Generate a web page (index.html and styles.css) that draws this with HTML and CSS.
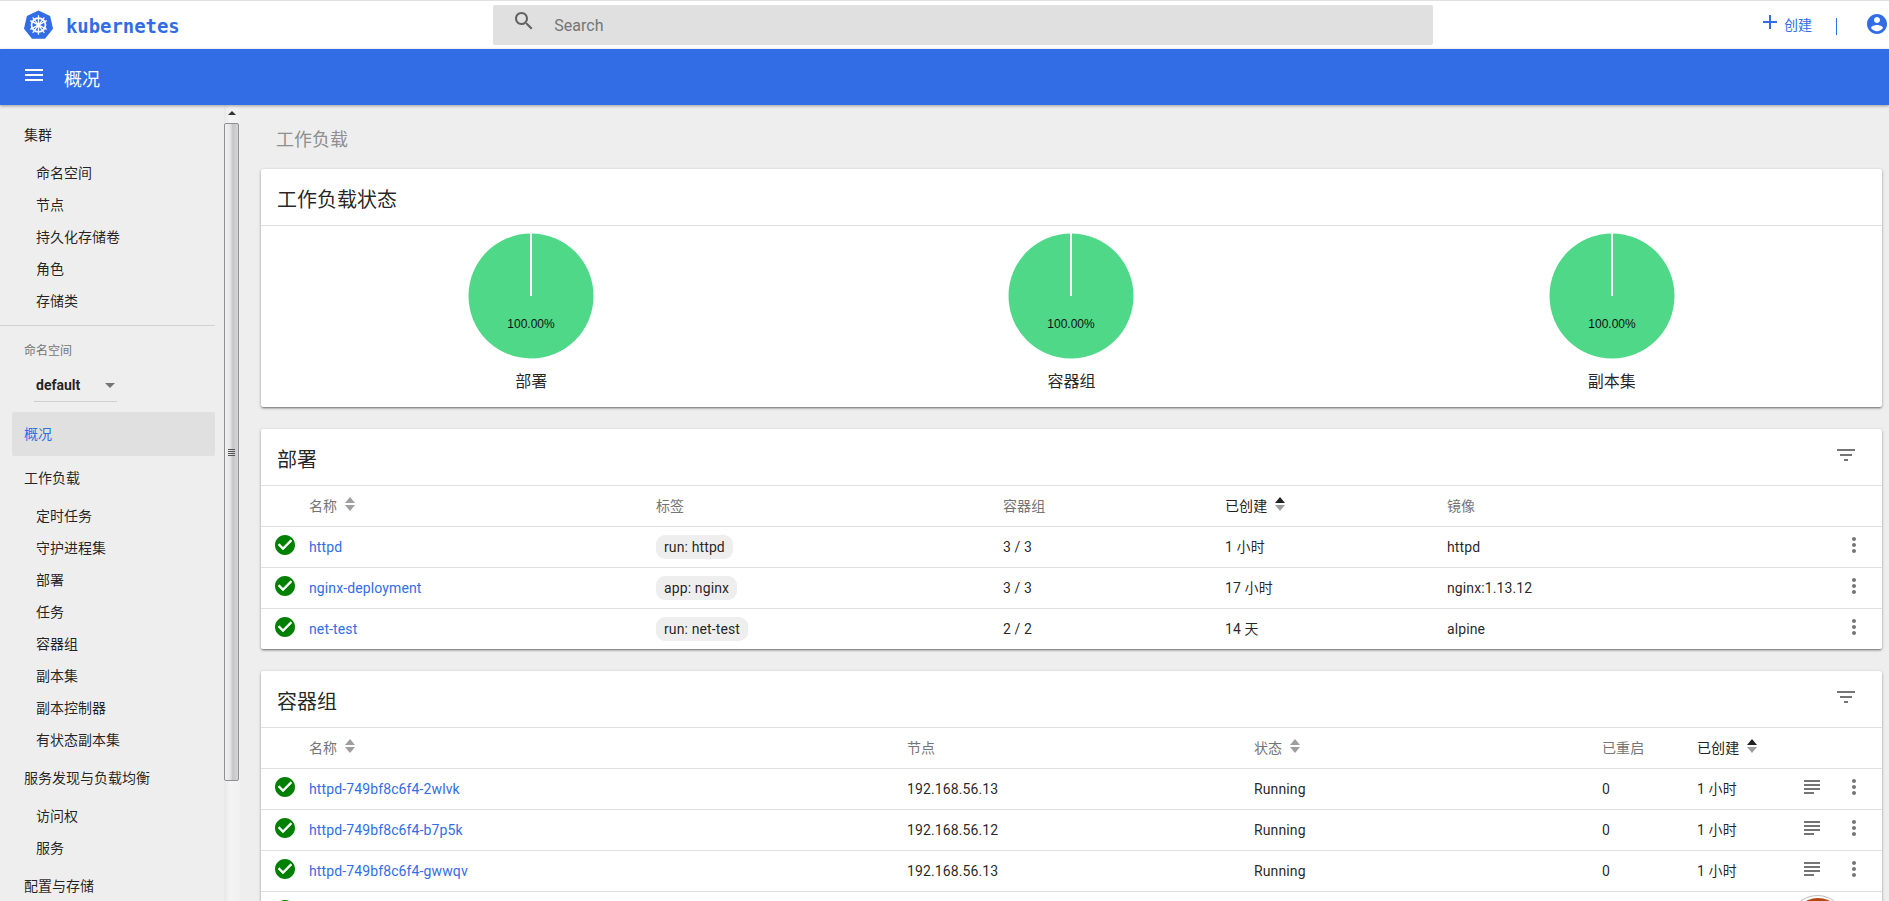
FILE: index.html
```html
<!DOCTYPE html>
<html lang="zh-CN">
<head>
<meta charset="utf-8">
<title>概况 - Kubernetes Dashboard</title>
<link rel="stylesheet" href="styles.css">
</head>
<body>
<svg class="defs" aria-hidden="true">
  <defs>
    <symbol id="i-check" viewBox="0 0 24 24"><path d="M12 2C6.48 2 2 6.48 2 12s4.48 10 10 10 10-4.48 10-10S17.52 2 12 2zm-2 15l-5-5 1.41-1.41L10 14.17l7.59-7.59L19 8l-9 9z" fill="#008000"/><path d="M10 17l-5-5 1.41-1.41L10 14.17l7.59-7.59L19 8z" fill="#fff"/></symbol>
    <symbol id="i-more" viewBox="0 0 24 24"><path d="M12 8c1.1 0 2-.9 2-2s-.9-2-2-2-2 .9-2 2 .9 2 2 2zm0 2c-1.1 0-2 .9-2 2s.9 2 2 2 2-.9 2-2-.9-2-2-2zm0 6c-1.1 0-2 .9-2 2s.9 2 2 2 2-.9 2-2-.9-2-2-2z"/></symbol>
    <symbol id="i-logs" viewBox="0 0 24 24"><path d="M14 17H4v2h10v-2zm6-8H4v2h16V9zM4 15h16v-2H4v2zM4 5v2h16V5H4z"/></symbol>
    <symbol id="i-filter" viewBox="0 0 24 24"><path d="M10 18h4v-2h-4v2zM3 6v2h18V6H3zm3 7h12v-2H6v2z"/></symbol>
    <symbol id="i-sort" viewBox="0 0 10 14"><path d="M5 0l5 6H0z"/><path d="M0 8h10l-5 6z"/></symbol>
    <symbol id="i-sort-up" viewBox="0 0 10 14"><path d="M5 0l5 6H0z" fill="#212121"/><path d="M0 8h10l-5 6z" fill="#9e9e9e"/></symbol>
  </defs>
</svg>

<header class="topbar">
  <a class="brand">
    <svg class="logo" viewBox="0 0 32 32">
      <path d="M16 .5l12 5.8 3 13-8.300 10.400H9.300L1 19.300l3-13z" fill="#326de6"/>
      <g fill="none" stroke="#fff">
        <circle cx="16" cy="15.500" r="7.200" stroke-width="1.800"/>
        <path d="M16 5.500v20M7.500 11l17 9M24.500 11l-17 9M10 23.500l12-16M22 23.500l-12-16" stroke-width="1.300"/>
      </g>
      <circle cx="16" cy="15.500" r="2" fill="#fff"/>
    </svg>
    <span class="brand-name">kubernetes</span>
  </a>
  <div class="search">
    <svg class="search-icon" viewBox="0 0 24 24"><path d="M15.500 14h-.79l-.28-.27C15.410 12.590 16 11.110 16 9.500 16 5.910 13.090 3 9.500 3S3 5.910 3 9.500 5.910 16 9.500 16c1.610 0 3.090-.59 4.230-1.570l.27.28v.79l5 4.990L20.490 19l-4.990-5zm-6 0C7.010 14 5 11.990 5 9.500S7.010 5 9.500 5 14 7.010 14 9.500 11.990 14 9.500 14z"/></svg>
    <span class="search-text">Search</span>
  </div>
  <div class="actions">
    <svg class="plus" viewBox="0 0 24 24"><path d="M19 13h-6v6h-2v-6H5v-2h6V5h2v6h6v2z"/></svg>
    <span class="create">创建</span>
    <span class="divider"></span>
    <svg class="account" viewBox="0 0 24 24"><path d="M12 2C6.480 2 2 6.480 2 12s4.480 10 10 10 10-4.480 10-10S17.520 2 12 2zm0 3c1.660 0 3 1.340 3 3s-1.340 3-3 3-3-1.340-3-3 1.340-3 3-3zm0 14.200c-2.500 0-4.710-1.280-6-3.220.03-1.990 4-3.080 6-3.080 1.990 0 5.970 1.090 6 3.080-1.290 1.940-3.500 3.220-6 3.220z"/></svg>
  </div>
</header>

<div class="toolbar">
  <svg class="menu" viewBox="0 0 24 24"><path d="M3 18h18v-2H3v2zm0-5h18v-2H3v2zm0-7v2h18V6H3z"/></svg>
  <span class="toolbar-title">概况</span>
</div>

<div class="main">
  <nav class="sidebar">
    <div class="nav-title first">集群</div>
    <a class="nav-item">命名空间</a>
    <a class="nav-item">节点</a>
    <a class="nav-item">持久化存储卷</a>
    <a class="nav-item">角色</a>
    <a class="nav-item">存储类</a>
    <div class="nav-sep"></div>
    <div class="ns-label">命名空间</div>
    <div class="ns-select"><span>default</span><i class="ns-arrow"></i></div>
    <div class="nav-active">概况</div>
    <div class="nav-title">工作负载</div>
    <a class="nav-item">定时任务</a>
    <a class="nav-item">守护进程集</a>
    <a class="nav-item">部署</a>
    <a class="nav-item">任务</a>
    <a class="nav-item">容器组</a>
    <a class="nav-item">副本集</a>
    <a class="nav-item">副本控制器</a>
    <a class="nav-item">有状态副本集</a>
    <div class="nav-title">服务发现与负载均衡</div>
    <a class="nav-item">访问权</a>
    <a class="nav-item">服务</a>
    <div class="nav-title">配置与存储</div>
  </nav>

  <div class="scrollbar">
    <div class="scroll-up"><i></i></div>
    <div class="scroll-thumb"><i></i></div>
  </div>

  <main class="content">
    <h1 class="page-title">工作负载</h1>

    <section class="card">
      <div class="card-head"><h2>工作负载状态</h2></div>
      <div class="pies">
        <figure class="pie">
          <svg viewBox="0 0 126 126"><circle cx="63" cy="63" r="62.500" fill="#4ed887"/><rect x="62" y="0" width="2" height="63" fill="#fff"/><text x="63" y="95" text-anchor="middle" class="pie-value">100.00%</text></svg>
          <figcaption>部署</figcaption>
        </figure>
        <figure class="pie">
          <svg viewBox="0 0 126 126"><circle cx="63" cy="63" r="62.500" fill="#4ed887"/><rect x="62" y="0" width="2" height="63" fill="#fff"/><text x="63" y="95" text-anchor="middle" class="pie-value">100.00%</text></svg>
          <figcaption>容器组</figcaption>
        </figure>
        <figure class="pie">
          <svg viewBox="0 0 126 126"><circle cx="63" cy="63" r="62.500" fill="#4ed887"/><rect x="62" y="0" width="2" height="63" fill="#fff"/><text x="63" y="95" text-anchor="middle" class="pie-value">100.00%</text></svg>
          <figcaption>副本集</figcaption>
        </figure>
      </div>
    </section>

    <section class="card">
      <div class="card-head"><h2>部署</h2><svg class="ic filter"><use href="#i-filter"/></svg></div>
      <div class="row deploy head">
        <span></span>
        <span>名称 <svg class="sort"><use href="#i-sort"/></svg></span>
        <span>标签</span>
        <span>容器组</span>
        <span class="active">已创建 <svg class="sort"><use href="#i-sort-up"/></svg></span>
        <span>镜像</span>
        <span></span>
      </div>
      <div class="row deploy">
        <svg class="status"><use href="#i-check"/></svg>
        <a class="link">httpd</a>
        <span><span class="chip">run: httpd</span></span>
        <span>3 / 3</span><span>1 小时</span><span>httpd</span>
        <svg class="ic more"><use href="#i-more"/></svg>
      </div>
      <div class="row deploy">
        <svg class="status"><use href="#i-check"/></svg>
        <a class="link">nginx-deployment</a>
        <span><span class="chip">app: nginx</span></span>
        <span>3 / 3</span><span>17 小时</span><span>nginx:1.13.12</span>
        <svg class="ic more"><use href="#i-more"/></svg>
      </div>
      <div class="row deploy last">
        <svg class="status"><use href="#i-check"/></svg>
        <a class="link">net-test</a>
        <span><span class="chip">run: net-test</span></span>
        <span>2 / 2</span><span>14 天</span><span>alpine</span>
        <svg class="ic more"><use href="#i-more"/></svg>
      </div>
    </section>

    <section class="card">
      <div class="card-head"><h2>容器组</h2><svg class="ic filter"><use href="#i-filter"/></svg></div>
      <div class="row pods head">
        <span></span>
        <span>名称 <svg class="sort"><use href="#i-sort"/></svg></span>
        <span>节点</span>
        <span>状态 <svg class="sort"><use href="#i-sort"/></svg></span>
        <span>已重启</span>
        <span class="active">已创建 <svg class="sort"><use href="#i-sort-up"/></svg></span>
        <span></span><span></span>
      </div>
      <div class="row pods">
        <svg class="status"><use href="#i-check"/></svg>
        <a class="link">httpd-749bf8c6f4-2wlvk</a>
        <span>192.168.56.13</span><span>Running</span><span>0</span><span>1 小时</span>
        <svg class="ic logs"><use href="#i-logs"/></svg>
        <svg class="ic more"><use href="#i-more"/></svg>
      </div>
      <div class="row pods">
        <svg class="status"><use href="#i-check"/></svg>
        <a class="link">httpd-749bf8c6f4-b7p5k</a>
        <span>192.168.56.12</span><span>Running</span><span>0</span><span>1 小时</span>
        <svg class="ic logs"><use href="#i-logs"/></svg>
        <svg class="ic more"><use href="#i-more"/></svg>
      </div>
      <div class="row pods">
        <svg class="status"><use href="#i-check"/></svg>
        <a class="link">httpd-749bf8c6f4-gwwqv</a>
        <span>192.168.56.13</span><span>Running</span><span>0</span><span>1 小时</span>
        <svg class="ic logs"><use href="#i-logs"/></svg>
        <svg class="ic more"><use href="#i-more"/></svg>
      </div>
      <div class="row pods partial">
        <svg class="status"><use href="#i-check"/></svg>
        <div class="avatar"><i></i></div>
      </div>
    </section>
  </main>
</div>
</body>
</html>
```

FILE: styles.css
```css
* { box-sizing: border-box; }
html, body { height: 100%; margin: 0; }
body {
  display: flex;
  flex-direction: column;
  overflow: hidden;
  background: #eee;
  color: rgba(0, 0, 0, .87);
  font: 14px/20px Roboto, "Noto Sans CJK SC", sans-serif;
}
.defs { position: absolute; width: 0; height: 0; }
a { color: inherit; text-decoration: none; }

/* Top bar */
.topbar {
  flex: none;
  display: flex;
  align-items: center;
  height: 49px;
  background: #fff;
  border-top: 1px solid #e0e0e0;
}
.brand { display: flex; align-items: center; width: 494px; padding-left: 23px; }
.logo { width: 31px; height: 31px; }
.brand-name {
  margin: 2px 0 0 12px;
  color: #326de6;
  font: 700 18.900px/24px "DejaVu Sans Mono", monospace;
}
.search {
  display: flex;
  align-items: center;
  width: 941px;
  height: 40px;
  padding-left: 19px;
  background: #e0e0e0;
  border-radius: 2px;
}
.search-icon { width: 24px; height: 24px; margin-top: -8px; fill: #616161; }
.search-text { margin: 2px 0 0 18px; color: #757575; font-size: 16px; }
.actions {
  display: flex;
  align-items: center;
  margin-left: 325px;
  flex: none;
}
.plus { width: 24px; height: 24px; margin-top: -7px; fill: #326de6; }
.create { margin-left: 2px; color: #326de6; font-size: 14px; }
.divider { width: 1px; height: 17px; margin: 2px 0 0 24px; background: #326de6; }
.account { width: 24px; height: 24px; margin: -2px 0 0 28px; fill: #326de6; flex: none; }

/* Blue toolbar */
.toolbar {
  position: relative;
  z-index: 2;
  flex: none;
  display: flex;
  align-items: center;
  height: 56px;
  padding-left: 22px;
  background: #326de6;
  box-shadow: 0 1px 3px rgba(0, 0, 0, .35);
}
.menu { width: 24px; height: 24px; margin-top: -4px; fill: #fff; }
.toolbar-title { margin: 5px 0 0 18px; color: #fff; font-size: 18px; line-height: 24px; }

/* Main layout */
.main { flex: 1; display: flex; min-height: 0; overflow: hidden; }

/* Sidebar */
.sidebar { flex: none; width: 224px; padding: 14px 9px 0 0; background: #eee; }
.nav-title {
  height: 32px;
  margin: 6px 0;
  padding-left: 24px;
  line-height: 32px;
}
.nav-title.first { margin-top: 0; }
.nav-item {
  display: block;
  height: 32px;
  padding-left: 36px;
  line-height: 32px;
}
.nav-sep { height: 1px; margin-top: 8px; background: #d2d2d2; }
.ns-label {
  margin-top: 15px;
  padding-left: 24px;
  color: #757575;
  font-size: 12px;
}
.ns-select {
  display: flex;
  align-items: center;
  justify-content: space-between;
  width: 83px;
  height: 33px;
  margin: 8px 0 10px 34px;
  padding: 0 2px;
  border-bottom: 1px solid #cfcfcf;
  font-weight: 700;
}
.ns-arrow {
  border: 5px solid transparent;
  border-top: 5px solid #757575;
  border-bottom: 0;
}
.nav-active {
  height: 44px;
  margin-left: 12px;
  padding-left: 12px;
  background: #e0e0e0;
  border-radius: 2px;
  color: #326de6;
  line-height: 44px;
}

/* Scrollbar drawing */
.scrollbar { flex: none; width: 16px; background: linear-gradient(90deg, #e8e8e8, #f4f4f4 40%, #f1f1f1); }
.scroll-up { display: flex; justify-content: center; height: 18px; padding-top: 6px; }
.scroll-up i {
  width: 0;
  height: 0;
  border: 4px solid transparent;
  border-bottom: 4px solid #333;
  border-top: 0;
}
.scroll-thumb {
  display: flex;
  align-items: center;
  justify-content: center;
  width: 15px;
  height: 658px;
  border: 1px solid #8f8f8f;
  border-radius: 2px;
  background: linear-gradient(90deg, #f1f1f1 0, #e6e6e6 40%, #c6c6ca 60%, #d6d6d8 100%);
}
.scroll-thumb i {
  width: 7px;
  height: 7px;
  background: repeating-linear-gradient(180deg, #555 0 1px, transparent 1px 2px);
}

/* Content */
.content { flex: 1; min-width: 0; padding: 20px 7px 0 21px; }
.page-title {
  height: 28px;
  margin: 1px 0 15px 15px;
  color: #8f8f8f;
  font-size: 18px;
  font-weight: 400;
  line-height: 28px;
}
.card {
  margin-bottom: 22px;
  background: #fff;
  border-radius: 2px;
  box-shadow: 0 1px 3px rgba(0, 0, 0, .35), 0 2px 2px -1px rgba(0, 0, 0, .3);
}
.card-head {
  display: flex;
  align-items: center;
  justify-content: space-between;
  height: 57px;
  padding: 0 24px 0 16px;
  border-bottom: 1px solid #e0e0e0;
}
.card-head h2 { margin: 5px 0 0; font-size: 20px; font-weight: 400; line-height: 28px; }
.ic { flex: none; width: 24px; height: 24px; fill: #757575; }
.filter { margin-top: -4px; }

/* Pies */
.pies { display: grid; grid-template-columns: repeat(3, 1fr); padding: 7px 0 13px; }
.pie { margin: 0; display: flex; flex-direction: column; align-items: center; }
.pie svg { display: block; width: 126px; height: 126px; }
.pie-value { font: 12px "Liberation Sans", sans-serif; fill: #111; }
.pie figcaption { margin-top: 11px; font-size: 16px; line-height: 24px; }

/* Table rows */
.row {
  display: grid;
  align-items: center;
  height: 41px;
  border-bottom: 1px solid #e0e0e0;
  letter-spacing: .12px;
}
.deploy { grid-template-columns: 48px 347px 347px 222px 222px 1fr 56px; }
.pods { grid-template-columns: 48px 598px 347px 348px 95px 103px 26px 1fr; }
.row.last { height: 40px; border-bottom: 0; }
.row.head { color: #757575; }
.row.head .active { color: #212121; }
.status { width: 24px; height: 24px; margin: -4px 0 0 12px; }
.link { color: #326de6; }
.chip {
  display: inline-block;
  height: 24px;
  padding: 0 8px;
  background: #eee;
  border-radius: 9px;
  color: rgba(0, 0, 0, .87);
  line-height: 24px;
}
.sort { width: 10px; height: 14px; margin: 0 0 5px 4px; fill: #9e9e9e; vertical-align: middle; }
.logs { margin: -4px 0 0 0; }
.more { margin-top: -4px; justify-self: center; }
.partial { position: relative; }
.avatar {
  position: absolute;
  top: 3px;
  left: 1528px;
  display: flex;
  align-items: center;
  justify-content: center;
  width: 57px;
  height: 57px;
  background: #fff;
  border: 1px solid #bdbdbd;
  border-radius: 50%;
}
.avatar i { width: 52px; height: 52px; background: #b5460f; border-radius: 50%; }
```
